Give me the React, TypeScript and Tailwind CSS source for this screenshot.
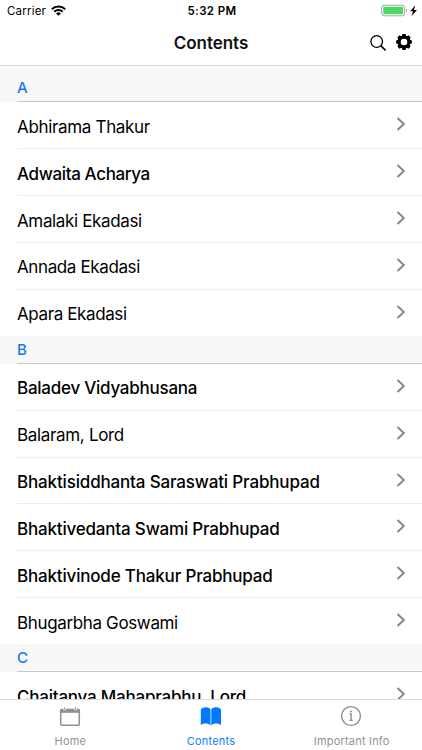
type Entry = { name: string; strong?: boolean; tracking: string };
type Section = { letter: string; entries: Entry[] };

const sections: Section[] = [
  {
    letter: 'A',
    entries: [
      { name: 'Abhirama Thakur', tracking: 'tracking-[-0.33px]' },
      { name: 'Adwaita Acharya', strong: true, tracking: 'tracking-[-0.36px]' },
      { name: 'Amalaki Ekadasi', tracking: 'tracking-[-0.36px]' },
      { name: 'Annada Ekadasi', tracking: 'tracking-[-0.38px]' },
      { name: 'Apara Ekadasi', tracking: 'tracking-[-0.39px]' },
    ],
  },
  {
    letter: 'B',
    entries: [
      { name: 'Baladev Vidyabhusana', strong: true, tracking: 'tracking-[-0.25px]' },
      { name: 'Balaram, Lord', tracking: 'tracking-[-0.33px]' },
      { name: 'Bhaktisiddhanta Saraswati Prabhupad', strong: true, tracking: 'tracking-[-0.16px]' },
      { name: 'Bhaktivedanta Swami Prabhupad', strong: true, tracking: 'tracking-[-0.19px]' },
      { name: 'Bhaktivinode Thakur Prabhupad', strong: true, tracking: 'tracking-[-0.18px]' },
      { name: 'Bhugarbha Goswami', tracking: 'tracking-[-0.36px]' },
    ],
  },
  {
    letter: 'C',
    entries: [{ name: 'Chaitanya Mahaprabhu, Lord', strong: true, tracking: 'tracking-[-0.22px]' }],
  },
];

function StatusBar() {
  return (
    <div className="grid h-[22px] grid-cols-3 items-center text-[11.5px] leading-[22px]">
      <div className="flex items-center gap-[5px] pl-[7px]">
        <span className="tracking-[0.2px]">Carrier</span>
        <svg width="15" height="11" viewBox="0 0 15 11" fill="none" stroke="#000" strokeWidth="2" className="mb-[2px]">
          <path d="M.8 4.2a9.5 9.5 0 0 1 13.4 0" />
          <path d="M3.3 6.7a5.9 5.9 0 0 1 8.4 0" />
          <path d="M7.5 10.8 5.1 8.5a3.4 3.4 0 0 1 4.8 0z" fill="#000" stroke="none" />
        </svg>
      </div>
      <div className="pl-[2px] text-center font-semibold tracking-[0.38px]">5:32 PM</div>
      <div className="flex items-center justify-end pb-[2px] pr-[4px]">
        <svg width="37" height="13" viewBox="0 0 37 13">
          <rect x="0.7" y="1.2" width="23" height="10.6" rx="2.6" fill="#fff" stroke="#a5a5a5" />
          <rect x="2.2" y="2.7" width="20" height="7.6" rx="1.2" fill="#4cd964" />
          <path d="M25 4.8c1.5.5 1.5 2.9 0 3.4z" fill="#a5a5a5" />
          <path d="M34.2 1.3 29.2 7.2h2.8L30.6 12 36 5.9h-3z" fill="#000" />
        </svg>
      </div>
    </div>
  );
}

function GearIcon() {
  return (
    <svg width="16" height="16" viewBox="-8 -8 16 16" className="mb-[2px]">
      <circle r="4.9" fill="none" stroke="#000" strokeWidth="3.2" />
      {[0, 45, 90, 135, 180, 225, 270, 315].map((angle) => (
        <path key={angle} d="M-2.3 -5.5 -1.5 -7.9H1.5L2.3 -5.5z" transform={`rotate(${angle})`} />
      ))}
    </svg>
  );
}

function Header() {
  return (
    <header className="h-[66px] shrink-0 border-b border-[#d5d5d9] bg-white">
      <StatusBar />
      <div className="grid h-[42px] grid-cols-[1fr_auto_1fr] items-center">
        <span />
        <h1 className="text-[17px] font-semibold leading-[22px] tracking-[-0.05px] text-[#111]">Contents</h1>
        <div className="flex items-center justify-end gap-[10px] pr-[10px]">
          <svg width="16" height="16" viewBox="0 0 16 16" fill="none" stroke="#000" strokeWidth="1.3">
            <circle cx="6.7" cy="6.5" r="5.8" />
            <path d="m10.8 10.6 4.8 4.8" strokeWidth="1.6" />
          </svg>
          <GearIcon />
        </div>
      </div>
    </header>
  );
}

function Chevron() {
  return (
    <svg width="10" height="14" viewBox="0 0 10 14" fill="none" stroke="#858588" strokeWidth="1.9" className="mb-[2px]">
      <path d="M1.5 1 7.8 7l-6.3 6" />
    </svg>
  );
}

function SectionBlock({ section, first }: { section: Section; first: boolean }) {
  return (
    <section>
      <div className={`flex flex-col justify-end bg-[#f8f8f8] pl-[17px] ${first ? 'h-[36.4px]' : 'h-[28.4px]'}`}>
        <h2 className="flex h-[28px] items-center border-b border-[#c8c7cc] pt-px text-[15px] font-medium text-[#1479ef]">
          {section.letter}
        </h2>
      </div>
      <ul>
        {section.entries.map((entry, i) => (
          <li key={entry.name} className="h-[46.85px] pl-[17px] last:h-[45.8px]">
            <div
              className={`flex h-full items-center justify-between pr-[16px] ${
                i < section.entries.length - 1 ? 'border-b border-[#ececee]' : ''
              }`}
            >
              <span
                className={`whitespace-nowrap pt-[3px] text-[17px] leading-[22px] ${entry.tracking} ${
                  entry.strong ? 'font-medium' : 'font-normal'
                }`}
              >
                {entry.name}
              </span>
              <Chevron />
            </div>
          </li>
        ))}
      </ul>
    </section>
  );
}

function TabBar() {
  return (
    <nav className="grid h-[51px] shrink-0 grid-cols-3 border-t border-[#dcdcde] bg-white text-[11px] leading-[14px] tracking-[0.2px] text-[#929292]">
      <div className="flex flex-col items-center">
        <svg width="22" height="20" viewBox="0 0 22 20" className="mt-[7px]">
          <rect x="1.7" y="2.4" width="18.6" height="15.9" rx="1.2" fill="none" stroke="#8e8e93" strokeWidth="1.5" />
          <path d="M1.5 2h19v3.8h-19z" fill="#8e8e93" />
          <path d="M5.5.5v2.8M16.5.5v2.8" stroke="#fff" strokeWidth="2.4" />
          <path d="M5.5.4v2.2M16.5.4v2.2" stroke="#8e8e93" strokeWidth="1.2" />
        </svg>
        <span className="mt-[7px]">Home</span>
      </div>
      <div className="flex flex-col items-center text-[#147efb]">
        <svg width="22" height="20" viewBox="0 0 22 20" className="mt-[7px]" fill="#007aff">
          <path d="M.8 2.5C2.8-.4 8.2-.4 10.5 2.2v16.2c-2.2-2.6-7.3-2.6-9.7-.4z" />
          <path d="M11.3 2.2c2.3-2.6 7.7-2.6 9.7.3V18c-2.4-2.2-7.5-2.2-9.7.4z" />
        </svg>
        <span className="mt-[7px]">Contents</span>
      </div>
      <div className="flex flex-col items-center">
        <svg width="22" height="22" viewBox="0 0 22 22" className="mr-[1px] mt-[5px]" fill="none" stroke="#8e8e93">
          <circle cx="11" cy="11" r="9.4" strokeWidth="1.4" />
          <path d="M9.5 9h1.6v6.4M9.4 15.4h3.4" strokeWidth="1.4" />
          <circle cx="11" cy="6.6" r="1" fill="#8e8e93" stroke="none" />
        </svg>
        <span className="mt-[7px]">Important Info</span>
      </div>
    </nav>
  );
}

export default function App() {
  return (
    <div className="flex h-[750px] w-[422px] flex-col overflow-hidden bg-white font-[Inter,'Liberation_Sans',sans-serif] text-black">
      <Header />
      <main className="min-h-0 flex-1 overflow-hidden">
        {sections.map((section, i) => (
          <SectionBlock key={section.letter} section={section} first={i === 0} />
        ))}
      </main>
      <TabBar />
    </div>
  );
}
